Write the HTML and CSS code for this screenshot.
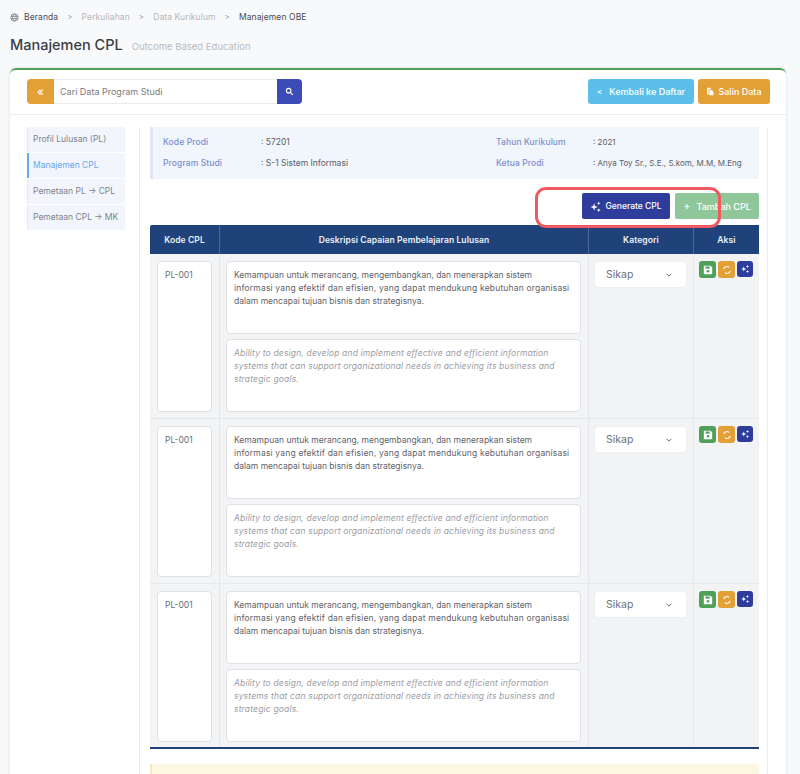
FILE: index.html
```html
<!DOCTYPE html>
<html lang="id">
<head>
<meta charset="utf-8">
<title>Manajemen CPL</title>
<link rel="stylesheet" href="styles.css">
</head>
<body>
<nav class="crumbs">
  <svg class="globe" viewBox="0 0 16 16"><circle cx="8" cy="8" r="6.5"/><ellipse cx="8" cy="8" rx="3" ry="6.5"/><path d="M1.5 6h13M1.5 10h13"/></svg>
  <span class="crumb-dark">Beranda</span><span class="sep">&gt;</span>
  <span class="crumb">Perkuliahan</span><span class="sep">&gt;</span>
  <span class="crumb">Data Kurikulum</span><span class="sep">&gt;</span>
  <span class="crumb-dark">Manajemen OBE</span>
</nav>
<header class="title-row">
  <h1>Manajemen CPL</h1><span class="subtitle">Outcome Based Education</span>
</header>
<main class="card">
  <div class="toolbar">
    <div class="search">
      <button class="search-toggle">«</button>
      <div class="search-input">Cari Data Program Studi</div>
      <button class="search-btn"><svg viewBox="0 0 16 16"><circle cx="6.5" cy="6.5" r="4"/><path d="M9.5 9.5 14 14"/></svg></button>
    </div>
    <div class="toolbar-actions">
      <button class="btn btn-info"><span class="chev">&lt;</span>Kembali ke Daftar</button>
      <button class="btn btn-warn"><svg class="copy" viewBox="0 0 12 12"><path d="M1.500 1h5v2h-3v7h-2z"/><path d="M4.500 4h3l2.500 2.500V11h-5.500z"/></svg>Salin Data</button>
    </div>
  </div>
  <div class="body">
    <aside class="side">
      <a class="side-item">Profil Lulusan (PL)</a>
      <a class="side-item active">Manajemen CPL</a>
      <a class="side-item">Pemetaan PL → CPL</a>
      <a class="side-item">Pemetaan CPL → MK</a>
    </aside>
    <section class="panel">
      <div class="info">
        <div class="info-col">
          <div class="info-row"><b>Kode Prodi</b><span>: 57201</span></div>
          <div class="info-row"><b>Program Studi</b><span>: S-1 Sistem Informasi</span></div>
        </div>
        <div class="info-col second">
          <div class="info-row"><b>Tahun Kurikulum</b><span>: 2021</span></div>
          <div class="info-row"><b>Ketua Prodi</b><span>: Anya Toy Sr., S.E., S.kom, M.M, M.Eng</span></div>
        </div>
      </div>
      <div class="table-actions">
        <button class="btn btn-gen"><svg class="spark" viewBox="0 0 12 12"><path d="M4.500 2.500 5.500 5.500 8.500 6.500 5.500 7.500 4.500 10.500 3.500 7.500.5 6.500 3.500 5.500zM9.500.5l.6 1.400 1.400.6-1.400.6-.6 1.400-.6-1.400-1.400-.6 1.400-.6zM9.500 8l.6 1.400 1.400.6-1.400.6-.6 1.400-.6-1.400-1.400-.6 1.400-.6z"/></svg>Generate CPL</button>
        <button class="btn btn-add"><span class="plus">+</span>Tambah CPL</button>
      </div>
      <table class="cpl">
        <thead>
          <tr><th class="c1">Kode CPL</th><th class="c2">Deskripsi Capaian Pembelajaran Lulusan</th><th class="c3">Kategori</th><th class="c4">Aksi</th></tr>
        </thead>
        <tbody>
          <tr>
            <td><div class="code">PL-001</div></td>
            <td class="desc">
              <div class="area">Kemampuan untuk merancang, mengembangkan, dan menerapkan sistem<br><span class="wide">informasi yang efektif dan efisien, yang dapat mendukung kebutuhan organisasi</span><br>dalam mencapai tujuan bisnis dan strategisnya.</div>
              <div class="area en">Ability to design, develop and implement effective and efficient information<br>systems that can support organizational needs in achieving its business and<br>strategic goals.</div>
            </td>
            <td class="muted"><div class="select">Sikap<svg viewBox="0 0 10 10"><path d="M2 3.500 5 6.500 8 3.500"/></svg></div></td>
            <td class="muted"><div class="acts">
              <button class="act green"><svg viewBox="0 0 12 12"><path class="fill" d="M1 1h8l2 2v8H1z"/><rect class="hole" x="3" y="1.800" width="5" height="2.500"/><circle class="hole" cx="6" cy="7.500" r="1.600"/></svg></button>
              <button class="act orange"><svg viewBox="0 0 12 12"><path class="line" d="M2 5a4 4 0 0 1 6.500-2.200M10 7a4 4 0 0 1-6.500 2.200"/></svg></button>
              <button class="act blue"><svg viewBox="0 0 12 12"><path class="fill" d="M4.500 3 5.300 5.200 7.500 6 5.300 6.800 4.500 9 3.700 6.800 1.500 6 3.700 5.200zM9 1l.5 1.500L11 3l-1.500.5L9 5l-.5-1.500L7 3l1.500-.5zM9 7l.5 1.500L11 9l-1.500.5L9 11l-.5-1.500L7 9l1.500-.5z"/></svg></button>
            </div></td>
          </tr>
          <tr>
            <td><div class="code">PL-001</div></td>
            <td class="desc">
              <div class="area">Kemampuan untuk merancang, mengembangkan, dan menerapkan sistem<br><span class="wide">informasi yang efektif dan efisien, yang dapat mendukung kebutuhan organisasi</span><br>dalam mencapai tujuan bisnis dan strategisnya.</div>
              <div class="area en">Ability to design, develop and implement effective and efficient information<br>systems that can support organizational needs in achieving its business and<br>strategic goals.</div>
            </td>
            <td class="muted"><div class="select">Sikap<svg viewBox="0 0 10 10"><path d="M2 3.500 5 6.500 8 3.500"/></svg></div></td>
            <td class="muted"><div class="acts">
              <button class="act green"><svg viewBox="0 0 12 12"><path class="fill" d="M1 1h8l2 2v8H1z"/><rect class="hole" x="3" y="1.800" width="5" height="2.500"/><circle class="hole" cx="6" cy="7.500" r="1.600"/></svg></button>
              <button class="act orange"><svg viewBox="0 0 12 12"><path class="line" d="M2 5a4 4 0 0 1 6.500-2.200M10 7a4 4 0 0 1-6.500 2.200"/></svg></button>
              <button class="act blue"><svg viewBox="0 0 12 12"><path class="fill" d="M4.500 3 5.300 5.200 7.500 6 5.300 6.800 4.500 9 3.700 6.800 1.500 6 3.700 5.200zM9 1l.5 1.500L11 3l-1.500.5L9 5l-.5-1.500L7 3l1.500-.5zM9 7l.5 1.500L11 9l-1.500.5L9 11l-.5-1.500L7 9l1.500-.5z"/></svg></button>
            </div></td>
          </tr>
          <tr>
            <td><div class="code">PL-001</div></td>
            <td class="desc">
              <div class="area">Kemampuan untuk merancang, mengembangkan, dan menerapkan sistem<br><span class="wide">informasi yang efektif dan efisien, yang dapat mendukung kebutuhan organisasi</span><br>dalam mencapai tujuan bisnis dan strategisnya.</div>
              <div class="area en">Ability to design, develop and implement effective and efficient information<br>systems that can support organizational needs in achieving its business and<br>strategic goals.</div>
            </td>
            <td class="muted"><div class="select">Sikap<svg viewBox="0 0 10 10"><path d="M2 3.500 5 6.500 8 3.500"/></svg></div></td>
            <td class="muted"><div class="acts">
              <button class="act green"><svg viewBox="0 0 12 12"><path class="fill" d="M1 1h8l2 2v8H1z"/><rect class="hole" x="3" y="1.800" width="5" height="2.500"/><circle class="hole" cx="6" cy="7.500" r="1.600"/></svg></button>
              <button class="act orange"><svg viewBox="0 0 12 12"><path class="line" d="M2 5a4 4 0 0 1 6.500-2.200M10 7a4 4 0 0 1-6.500 2.200"/></svg></button>
              <button class="act blue"><svg viewBox="0 0 12 12"><path class="fill" d="M4.500 3 5.300 5.200 7.500 6 5.300 6.800 4.500 9 3.700 6.800 1.500 6 3.700 5.200zM9 1l.5 1.500L11 3l-1.500.5L9 5l-.5-1.500L7 3l1.500-.5zM9 7l.5 1.500L11 9l-1.500.5L9 11l-.5-1.500L7 9l1.500-.5z"/></svg></button>
            </div></td>
          </tr>
        </tbody>
      </table>
      <div class="alert"></div>
    </section>
  </div>
</main>
<div class="highlight"></div>
</body>
</html>
```
FILE: styles.css
```css
* { box-sizing: border-box; }
html, body { height: 774px; overflow: hidden; }
body {
  margin: 0;
  background: #f8f9fa;
  font-family: "Inter", "Open Sans", sans-serif;
  color: #3f4254;
  position: relative;
}
button { font-family: inherit; border: 0; cursor: pointer; padding: 0; }
.crumbs {
  display: flex;
  align-items: center;
  height: 14px;
  margin: 10px 0 0 10px;
  font-size: 8.5px;
  letter-spacing: .1px;
}
.globe { width: 9px; height: 9px; margin-right: 5px; fill: none; stroke: #55585f; stroke-width: 1; }
.crumb-dark { color: #4a4d55; }
.crumb { color: #b5b7bd; }
.sep { color: #9a9ca3; margin: 0 9px; font-size: 8px; }
.title-row { display: flex; align-items: baseline; margin: 10px 0 0 10px; height: 24px; }
h1 { margin: 0; font-size: 14.5px; font-weight: 500; color: #3a3d46; line-height: 22px; }
.subtitle { margin-left: 9px; font-size: 9.5px; color: #b9bbc1; }
.card {
  margin: 10px 14px 0 10px;
  background: #fff;
  border-top: 2px solid #4fa05a;
  border-radius: 6px 6px 0 0;
  box-shadow: 0 0 3px rgba(0,0,0,.12);
  height: 720px;
}
.toolbar {
  height: 45px;
  display: flex;
  justify-content: space-between;
  align-items: flex-start;
  padding: 9px 16px 0 17px;
  border-bottom: 1px solid #ebedf0;
}
.search { display: flex; height: 25px; width: 275px; }
.search-toggle {
  width: 27px;
  background: #e2a037;
  color: #fff;
  font-size: 12px;
  border-radius: 4px 0 0 4px;
}
.search-input {
  flex: 1;
  border: 1px solid #e8eaed;
  border-width: 1px 0;
  padding-left: 6px;
  font-size: 9px;
  line-height: 23px;
  color: #787b84;
}
.search-btn {
  width: 25px;
  background: #3b4cb8;
  border-radius: 0 4px 4px 0;
  display: flex;
  align-items: center;
  justify-content: center;
}
.search-btn svg { width: 9px; height: 9px; fill: none; stroke: #fff; stroke-width: 2; }
.toolbar-actions { display: flex; gap: 4px; }
.btn {
  display: flex;
  align-items: center;
  justify-content: center;
  color: #fff;
  font-size: 9px;
  font-weight: 500;
  border-radius: 3px;
  height: 25px;
}
.btn-info { width: 106px; background: #5bbfea; }
.chev { margin-right: 7px; font-size: 8px; }
.btn-warn { width: 72px; background: #e2a037; }
.copy { width: 9px; height: 9px; margin-right: 3px; fill: #fff; }
.body { display: flex; padding: 12px 0 0 17px; }
.side { width: 98px; display: flex; flex-direction: column; gap: 1px; }
.side-item {
  height: 25px;
  line-height: 24px;
  background: #f2f6fc;
  border-left: 1px solid #e3e9f3;
  padding-left: 5px;
  font-size: 8.5px;
  color: #80838b;
  white-space: nowrap;
}
.side-item.active { color: #6aa5ee; border-left: 2px solid #6aa5ee; padding-left: 4px; }
.panel {
  width: 629px;
  height: 700px;
  margin-left: 14px;
  padding-left: 10px;
  border-left: 1px solid #ebedf0;
  border-right: 1px solid #ebedf0;
}
.info {
  width: 609px;
  height: 52px;
  display: flex;
  background: #f1f5fc;
  border-left: 3px solid #dfe6f1;
  padding: 9px 0 0 10px;
  font-size: 8.5px;
}
.info-col { width: 333px; display: flex; flex-direction: column; gap: 8px; }
.info-col.second { width: auto; }
.second .info-row span { font-size: 8px; }
.info-row { display: flex; height: 13px; line-height: 13px; white-space: nowrap; color: #5c5f68; }
.info-row b { font-weight: 500; color: #7c8fd2; width: 98px; letter-spacing: .1px; }
.second .info-row b { width: 97px; }
.table-actions { width: 609px; display: flex; justify-content: flex-end; gap: 5px; margin-top: 14px; }
.btn-gen { width: 88px; height: 26px; background: #2e3c9b; border-radius: 2px; font-size: 8.5px; }
.spark { width: 11px; height: 11px; margin-right: 4px; fill: #fff; }
.btn-add { width: 84px; height: 26px; background: #8fc79b; border-radius: 2px; }
.plus { margin-right: 6px; font-size: 11px; font-weight: 400; }
.cpl {
  width: 609px;
  margin-top: 6px;
  border-collapse: separate;
  border-spacing: 0;
  table-layout: fixed;
  font-size: 8.5px;
  border-bottom: 2px solid #1e4279;
}
.cpl th {
  height: 29px;
  background: #1e4279;
  color: #eef2f8;
  font-size: 8.5px;
  font-weight: 600;
  letter-spacing: .1px;
  border-left: 1px solid #4a6a99;
  padding: 0;
}
.cpl th:first-child { border-left: 0; border-radius: 2px 0 0 0; }
.c1 { width: 69px; }
.c2 { width: 369px; }
.c3 { width: 105px; }
.c4 { width: 66px; }
.cpl td {
  background: #f3f4f6;
  vertical-align: top;
  padding: 7px 7px 6px;
  border-left: 1px solid #e6e8eb;
  border-bottom: 1px solid #e6e8eb;
}
.cpl td:first-child { border-left: 0; }
.cpl td.desc { padding-left: 6px; }
.cpl tbody tr:last-child td { border-bottom: 0; padding-bottom: 5px; }
.cpl td.muted { background: #f1f3f5; }
.code {
  width: 55px;
  height: 151px;
  background: #fff;
  border: 1px solid #dfe1e5;
  border-radius: 4px;
  padding: 7px 7px;
  color: #6a6d75;
  line-height: 13px;
}
.area {
  width: 355px;
  height: 73px;
  background: #fff;
  border: 1px solid #dfe1e5;
  border-radius: 4px;
  padding: 7px 7px;
  line-height: 13px;
  color: #5f6269;
  margin-bottom: 5px;
  white-space: nowrap;
  overflow: hidden;
}
.wide { letter-spacing: .18px; }
.area.en { margin-bottom: 0; font-style: italic; color: #9b9da3; letter-spacing: .17px; }
.select {
  width: 93px;
  height: 27px;
  margin-left: -2px;
  background: #fff;
  border-radius: 4px;
  border: 1px solid #eef0f2;
  display: flex;
  align-items: center;
  justify-content: space-between;
  padding: 0 13px 0 11px;
  font-size: 10.5px;
  color: #6e7178;
}
.select svg { width: 8px; height: 8px; fill: none; stroke: #60636b; stroke-width: 1.2; }
.acts { display: flex; gap: 2px; margin: 0 -2px 0 -2px; align-items: flex-start; }
.act {
  width: 17px;
  height: 17px;
  border-radius: 3px;
  display: flex;
  align-items: center;
  justify-content: center;
}
.act svg { width: 10px; height: 10px; }
.act.blue { height: 16px; width: 16px; }
.green { background: #4fa05a; }
.orange { background: #e2a037; }
.blue { background: #2e3c9b; }
.fill { fill: #fff; }
.green .hole { fill: #4fa05a; }
.line { fill: none; stroke: #fff; stroke-width: 1.3; }
.alert { width: 609px; height: 40px; margin-top: 15px; background: #fdf6e0; border-left: 2px solid #f5e9c5; }
.highlight {
  position: absolute;
  left: 535px;
  top: 187px;
  width: 186px;
  height: 41px;
  border: 3px solid #ee5a5f;
  border-radius: 11px;
}
```
